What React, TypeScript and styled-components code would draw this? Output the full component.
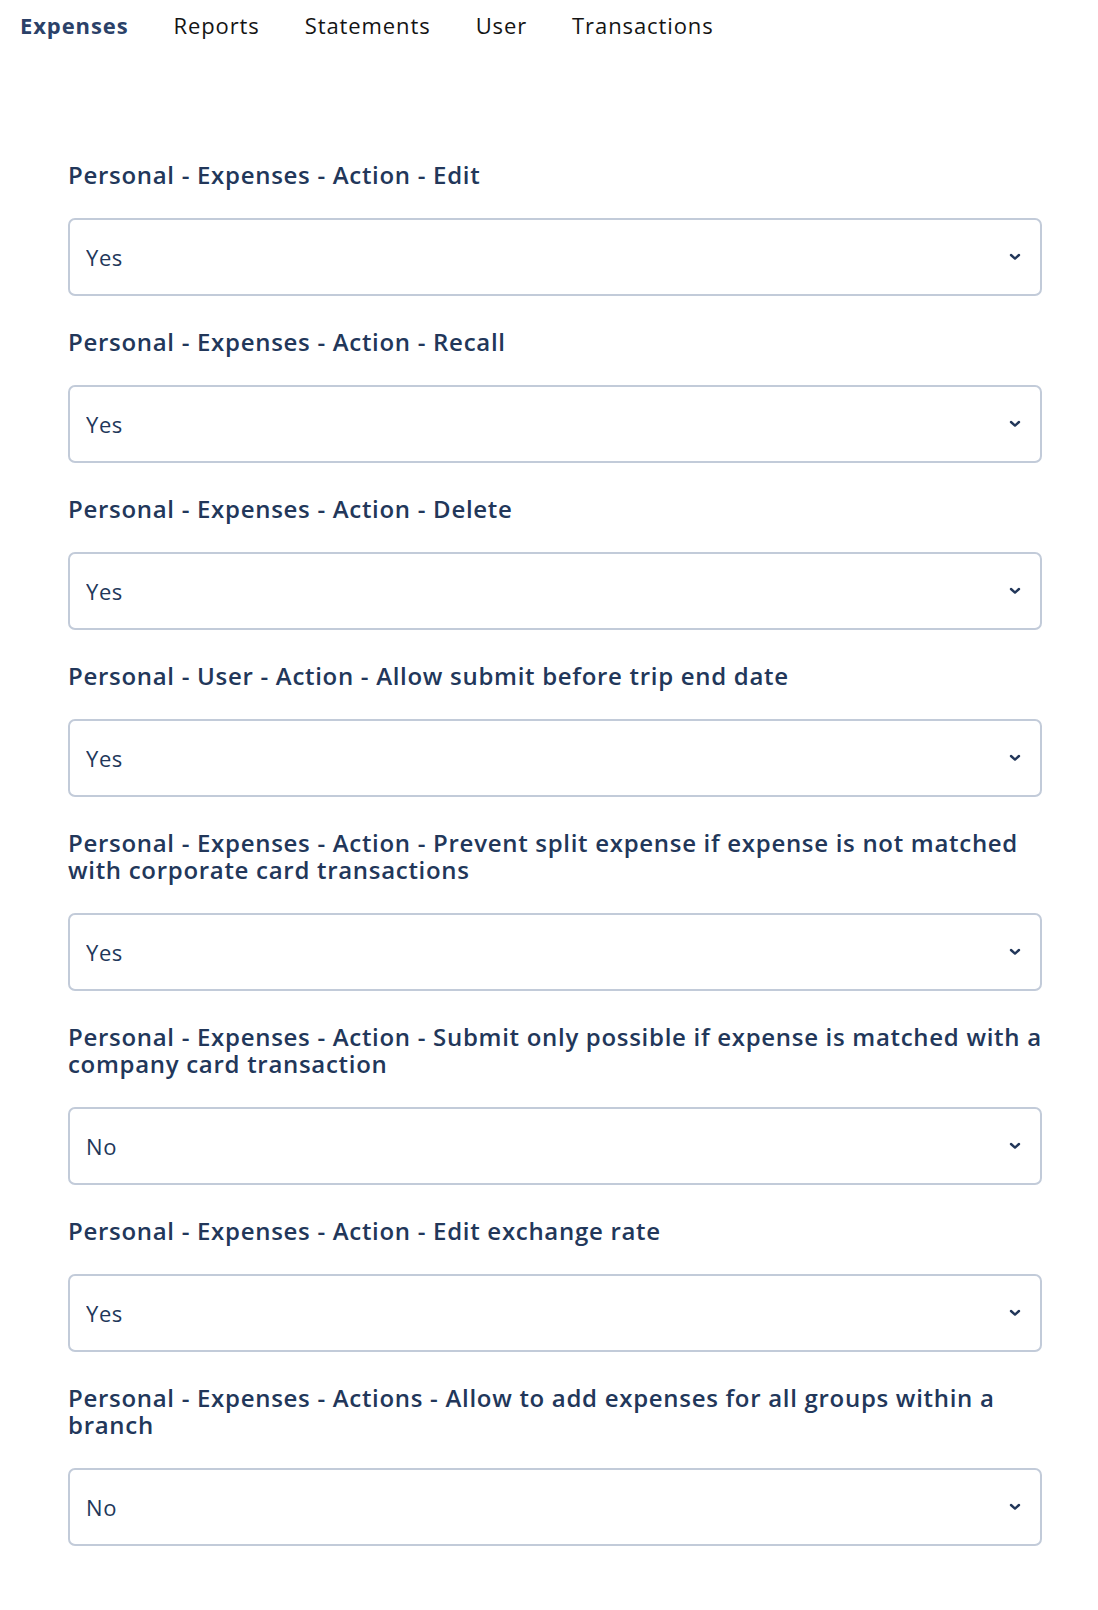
import styled, { createGlobalStyle } from "styled-components";

const GlobalStyle = createGlobalStyle`
  body {
    margin: 0;
    background: #ffffff;
    font-family: "Open Sans", Lato, sans-serif;
  }
`;

const tabs = ["Expenses", "Reports", "Statements", "User", "Transactions"];

const settings = [
  { label: "Personal - Expenses - Action - Edit", value: "Yes" },
  { label: "Personal - Expenses - Action - Recall", value: "Yes" },
  { label: "Personal - Expenses - Action - Delete", value: "Yes" },
  { label: "Personal - User - Action - Allow submit before trip end date", value: "Yes" },
  {
    label:
      "Personal - Expenses - Action - Prevent split expense if expense is not matched with corporate card transactions",
    value: "Yes",
  },
  {
    label:
      "Personal - Expenses - Action - Submit only possible if expense is matched with a company card transaction",
    value: "No",
  },
  { label: "Personal - Expenses - Action - Edit exchange rate", value: "Yes" },
  {
    label: "Personal - Expenses - Actions - Allow to add expenses for all groups within a branch",
    value: "No",
  },
];

const App: React.FC = () => {
  return (
    <Page>
      <GlobalStyle />
      <TabBar>
        {tabs.map((t, i) => (
          <Tab key={t} active={i === 0}>
            {t}
          </Tab>
        ))}
      </TabBar>
      <Form>
        {settings.map((s) => (
          <Field key={s.label}>
            <Label>{s.label}</Label>
            <SelectWrap>
              <Select defaultValue={s.value}>
                <option>Yes</option>
                <option>No</option>
              </Select>
              <Chevron width="12" height="8" viewBox="0 0 12 8">
                <path d="M2 2l4 3.6L10 2" fill="none" stroke="#22375a" strokeWidth="2.4" strokeLinecap="round" strokeLinejoin="round" />
              </Chevron>
            </SelectWrap>
          </Field>
        ))}
      </Form>
    </Page>
  );
};

export default App;

const Page = styled.div`
  width: 1098px;
  min-height: 1610px;
`;

const TabBar = styled.nav`
  display: flex;
  gap: 45px;
  padding: 10px 20px 0;
  height: 40px;
`;

const Tab = styled.div<{ active?: boolean }>`
  font-size: 22px;
  line-height: 30px;
  letter-spacing: 0.9px;
  font-weight: ${(p) => (p.active ? 700 : 400)};
  color: ${(p) => (p.active ? "#2b4168" : "#141414")};
`;

const Form = styled.div`
  padding: 111px 56px 0 68px;
`;

const Field = styled.div`
  margin-bottom: 32px;
`;

const Label = styled.div`
  font-size: 24px;
  line-height: 27px;
  letter-spacing: 0.7px;
  font-weight: 600;
  color: #22375a;
  margin-bottom: 30px;
`;

const SelectWrap = styled.div`
  position: relative;
`;

const Select = styled.select`
  appearance: none;
  display: block;
  width: 100%;
  height: 78px;
  box-sizing: border-box;
  border: 2px solid #c2cbd9;
  border-radius: 7px;
  background: #ffffff;
  padding: 0 16px;
  font-family: "Open Sans", Lato, sans-serif;
  font-size: 22px;
  letter-spacing: 0.6px;
  color: #22375a;
  outline: none;
`;

const Chevron = styled.svg`
  position: absolute;
  right: 21px;
  top: 35px;
  pointer-events: none;
`;
